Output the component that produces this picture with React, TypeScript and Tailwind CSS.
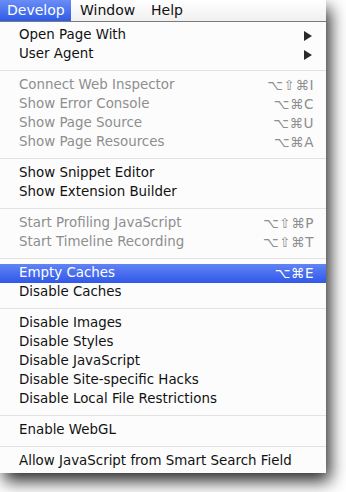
import React from "react";

type Item =
  | { type: "sep" }
  | { type: "item"; label: string; shortcut?: string; disabled?: boolean; submenu?: boolean; active?: boolean };

const items: Item[] = [
  { type: "item", label: "Open Page With", submenu: true },
  { type: "item", label: "User Agent", submenu: true },
  { type: "sep" },
  { type: "item", label: "Connect Web Inspector", shortcut: "⌥⇧⌘I", disabled: true },
  { type: "item", label: "Show Error Console", shortcut: "⌥⌘C", disabled: true },
  { type: "item", label: "Show Page Source", shortcut: "⌥⌘U", disabled: true },
  { type: "item", label: "Show Page Resources", shortcut: "⌥⌘A", disabled: true },
  { type: "sep" },
  { type: "item", label: "Show Snippet Editor" },
  { type: "item", label: "Show Extension Builder" },
  { type: "sep" },
  { type: "item", label: "Start Profiling JavaScript", shortcut: "⌥⇧⌘P", disabled: true },
  { type: "item", label: "Start Timeline Recording", shortcut: "⌥⇧⌘T", disabled: true },
  { type: "sep" },
  { type: "item", label: "Empty Caches", shortcut: "⌥⌘E", active: true },
  { type: "item", label: "Disable Caches" },
  { type: "sep" },
  { type: "item", label: "Disable Images" },
  { type: "item", label: "Disable Styles" },
  { type: "item", label: "Disable JavaScript" },
  { type: "item", label: "Disable Site-specific Hacks" },
  { type: "item", label: "Disable Local File Restrictions" },
  { type: "sep" },
  { type: "item", label: "Enable WebGL" },
  { type: "sep" },
  { type: "item", label: "Allow JavaScript from Smart Search Field" },
];

function Arrow() {
  return (
    <svg width="8" height="10" viewBox="0 0 8 10" className="block mr-[2px]">
      <path d="M0 0 L8 5 L0 10 Z" fill="#2a2a2a" />
    </svg>
  );
}

export default function App() {
  return (
    <div
      className="w-[346px] h-[492px] bg-white overflow-hidden"
      style={{ fontFamily: '"DejaVu Sans", "Lucida Grande", sans-serif' }}
    >
      <div className="w-[326px] bg-white shadow-[4px_8px_16px_rgba(0,0,0,0.85)]">
        <div className="h-[22px] flex items-stretch border-b border-[#7a7a7a] bg-gradient-to-b from-white to-[#f0f0f0] text-[14px] text-[#111]">
          <div className="w-[71px] pl-[7px] flex items-center bg-gradient-to-b from-[#6a8cf6] to-[#2f5ae6] text-white">Develop</div>
          <div className="pl-[9px] w-[80px] flex items-center">Window</div>
          <div className="flex items-center">Help</div>
        </div>
        <div className="pt-[4px] pb-[2px] bg-[#fcfcfc] text-[13.4px]">
          {items.map((it, i) =>
            it.type === "sep" ? (
              <div key={i} className="h-[12px] flex items-center">
                <div className="h-px w-full bg-[#e2e2e2]" />
              </div>
            ) : (
              <div
                key={i}
                className={
                  "h-[19px] flex items-center pl-[19px] pr-[12px] " +
                  (it.active
                    ? "bg-gradient-to-b from-[#6183f5] to-[#3157e8] text-white"
                    : it.disabled
                    ? "text-[#8e8e8e]"
                    : "text-[#111]")
                }
              >
                <span className="flex-1 whitespace-nowrap">{it.label}</span>
                {it.shortcut && <span className="whitespace-nowrap tracking-[0.5px] text-[13.6px]">{it.shortcut}</span>}
                {it.submenu && <Arrow />}
              </div>
            )
          )}
        </div>
      </div>
    </div>
  );
}
